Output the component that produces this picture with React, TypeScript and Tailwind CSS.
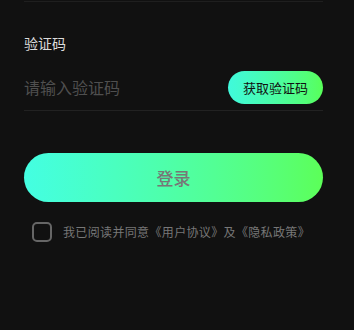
export default function App() {
  const font = { fontFamily: '"Noto Sans CJK SC", "Noto Sans", sans-serif' };

  return (
    <div className="h-[330px] w-[354px] overflow-hidden bg-[#111111]" style={font}>
      <div className="ml-6 mr-[31px] h-[2px] border-b border-[#1f1f1f]" />

      <div className="pl-6 pr-[31px]">
        <div className="mt-[31px] text-[14px] leading-5 text-[#dcdcdc]">验证码</div>

        <div className="mt-[18px] flex h-[40px] items-start justify-between border-b border-[#222222]">
          <span className="text-[16px] leading-[33px] text-[#4f4f4f]">请输入验证码</span>
          <button className="flex h-[33px] w-[95px] items-center justify-center rounded-full bg-gradient-to-r from-[#40f9dc] to-[#58ff58] text-[13px] text-[#111]">
            获取验证码
          </button>
        </div>

        <button className="mt-[42px] flex h-[49px] w-full items-center justify-center rounded-full bg-gradient-to-r from-[#44fee2] to-[#5cff58] text-[17px] font-medium text-[#777777]">
          登录
        </button>

        <div className="mt-[20px] flex items-center gap-[11px] pl-2">
          <div className="h-[20px] w-[20px] rounded-[5px] border-2 border-[#666666]" />
          <span className="text-[12px] tracking-[0.35px] text-[#777777]">我已阅读并同意《用户协议》及《隐私政策》</span>
        </div>
      </div>
    </div>
  );
}
